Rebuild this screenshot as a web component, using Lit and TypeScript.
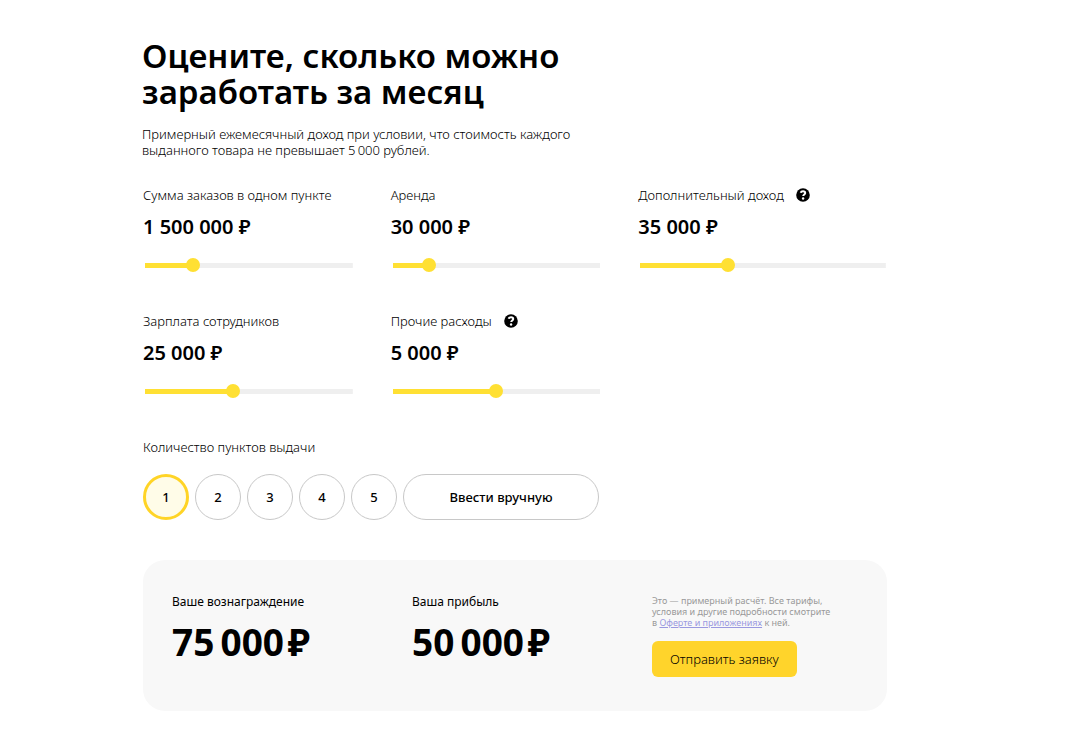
import { LitElement, html, css, nothing } from "lit";
import { customElement, property, state } from "lit/decorators.js";

const format = (n: number) => String(n).replace(/\B(?=(\d{3})+$)/g, "\u00a0");

@customElement("money-slider")
class MoneySlider extends LitElement {
  @property() label = "";
  @property({ type: Number }) value = 0;
  @property({ type: Number }) max = 100;
  @property({ type: Number }) step = 1000;
  @property({ type: Boolean }) hint = false;

  static styles = css`
    :host {
      display: block;
    }
    .head {
      display: flex;
      align-items: center;
      gap: 12px;
      height: 20px;
      font-size: 13px;
      font-weight: 300;
      line-height: 20px;
      white-space: nowrap;
    }
    .help {
      display: block;
      width: 14px;
      height: 14px;
      padding: 0;
      border: 0;
      background: none;
      cursor: pointer;
    }
    .help svg {
      display: block;
    }
    .value {
      display: block;
      margin-top: 8px;
      font-size: 20px;
      font-weight: 600;
      line-height: 28px;
    }
    .range {
      --ratio: 0;
      --fill: calc(7px + (100% - 14px) * var(--ratio));
      display: block;
      box-sizing: border-box;
      width: calc(100% - 2px);
      height: 14px;
      margin: 17px 0 0 2px;
      appearance: none;
      background: linear-gradient(#ffe033, #ffe033) left center / var(--fill) 5px no-repeat,
        linear-gradient(#efefef, #efefef) center / 100% 5px no-repeat;
      cursor: pointer;
    }
    .range::-webkit-slider-thumb {
      appearance: none;
      width: 14px;
      height: 14px;
      border-radius: 50%;
      background: #ffe033;
    }
  `;

  private onInput(e: Event) {
    this.value = Number((e.target as HTMLInputElement).value);
  }

  render() {
    return html`
      <div class="head">
        <label for="range">${this.label}</label>
        ${this.hint
          ? html`<button class="help" type="button" aria-label="Подсказка">
              <svg width="14" height="14" viewBox="0 0 14 14" aria-hidden="true">
                <circle cx="7" cy="7" r="6.8" fill="#000" />
                <path d="M4.7 4.7C5 3.5 5.9 3.2 7 3.2s2.2.6 2.2 1.8c0 1.5-2 1.5-2 3.1" fill="none" stroke="#fff" stroke-width="2" />
                <circle cx="7.1" cy="10.5" r="1.2" fill="#fff" />
              </svg>
            </button>`
          : nothing}
      </div>
      <output class="value" for="range">${format(this.value)} ₽</output>
      <input
        id="range"
        class="range"
        type="range"
        min="0"
        max=${this.max}
        step=${this.step}
        .value=${String(this.value)}
        style="--ratio: ${this.value / this.max}"
        @input=${this.onInput}
      />
    `;
  }
}

@customElement("app-root")
class AppRoot extends LitElement {
  @state() private points = "1";

  static styles = css`
    :host {
      display: block;
      box-sizing: border-box;
      min-height: 100vh;
      padding: 38px 193px 38px 142px;
      background: #fff;
      color: #000;
      font-family: "Noto Sans", "Open Sans", sans-serif;
      font-size: 13px;
    }
    .title {
      margin: 0;
      font-size: 33px;
      font-weight: 600;
      line-height: 36px;
    }
    .lead {
      margin: 16px 0 0;
      font-weight: 300;
      line-height: 16px;
    }
    .sliders {
      display: grid;
      grid-template-columns: repeat(3, 1fr);
      row-gap: 39px;
      margin-top: 27px;
      padding: 0 1px;
    }
    .narrow {
      padding-right: 38px;
    }
    .points {
      margin: 39px 0 0;
      padding: 0 0 0 1px;
      border: 0;
    }
    .legend {
      padding: 0;
      font-weight: 300;
      line-height: 20px;
    }
    .options {
      display: flex;
      gap: 6px;
      margin-top: 17px;
    }
    .option {
      box-sizing: border-box;
      width: 46px;
      height: 46px;
      padding: 0;
      border: 1px solid #c8c8c8;
      border-radius: 23px;
      background: #fff;
      color: #000;
      font: 500 13px/20px "Noto Sans", "Open Sans", sans-serif;
      cursor: pointer;
    }
    .manual {
      width: 196px;
    }
    .option[aria-pressed="true"] {
      border: 3px solid #ffd426;
      background: #fffce8;
    }
    .summary {
      display: grid;
      grid-template-columns: 240px 240px 1fr;
      box-sizing: border-box;
      min-height: 151px;
      margin: 40px 0 0 1px;
      padding: 32px 29px;
      border-radius: 22px;
      background: #f8f8f8;
    }
    .caption {
      margin: 0;
      font-size: 12px;
      line-height: 20px;
    }
    .total {
      margin: 6px 0 0;
      font-size: 37px;
      font-weight: 700;
      line-height: 48px;
      white-space: nowrap;
    }
    .note {
      margin: 3px 0 13px;
      color: #999;
      font-size: 9px;
      line-height: 11px;
      white-space: nowrap;
    }
    .link {
      color: #9a98e0;
    }
    .submit {
      height: 36px;
      padding: 0 18px;
      border: 0;
      border-radius: 6px;
      background: #ffd42b;
      color: #000;
      font: 300 13px/20px "Noto Sans", "Open Sans", sans-serif;
      cursor: pointer;
    }
  `;

  private option(value: string, extra = "") {
    return html`<button
      type="button"
      class="option ${extra}"
      aria-pressed=${this.points === value ? "true" : "false"}
      @click=${() => (this.points = value)}
    >${value}</button>`;
  }

  render() {
    return html`
      <h1 class="title">Оцените, сколько можно<br />заработать за месяц</h1>
      <p class="lead">
        Примерный ежемесячный доход при условии, что стоимость каждого<br />выданного товара не превышает 5&#8239;000 рублей.
      </p>
      <section class="sliders">
        <money-slider class="narrow" label="Сумма заказов в одном пункте" value="1500000" max="7000000"></money-slider>
        <money-slider class="narrow" label="Аренда" value="30000" max="200000"></money-slider>
        <money-slider label="Дополнительный доход" value="35000" max="100000" hint></money-slider>
        <money-slider class="narrow" label="Зарплата сотрудников" value="25000" max="60000"></money-slider>
        <money-slider class="narrow" label="Прочие расходы" value="5000" max="10000" hint></money-slider>
      </section>
      <fieldset class="points">
        <legend class="legend">Количество пунктов выдачи</legend>
        <div class="options">
          ${["1", "2", "3", "4", "5"].map((n) => this.option(n))}
          ${this.option("Ввести вручную", "manual")}
        </div>
      </fieldset>
      <section class="summary">
        <div>
          <p class="caption">Ваше вознаграждение</p>
          <p class="total">75&#8239;000&#8202;₽</p>
        </div>
        <div>
          <p class="caption">Ваша прибыль</p>
          <p class="total">50&#8239;000&#8202;₽</p>
        </div>
        <div>
          <p class="note">
            Это — примерный расчёт. Все тарифы,<br />условия и другие подробности смотрите<br />в
            <a class="link" href="#offer">Оферте и приложениях</a> к ней.
          </p>
          <button class="submit" type="button">Отправить заявку</button>
        </div>
      </section>
    `;
  }
}
